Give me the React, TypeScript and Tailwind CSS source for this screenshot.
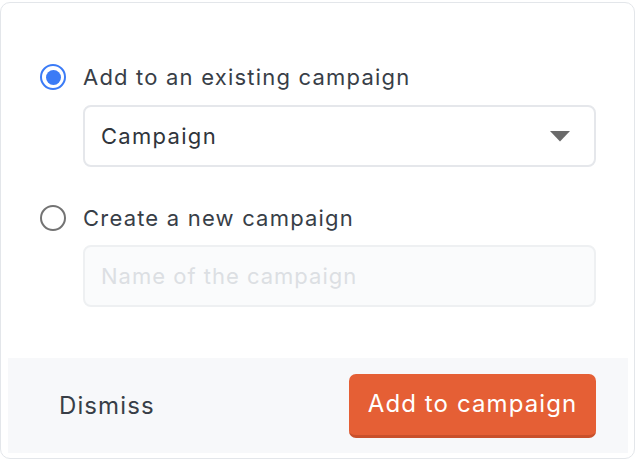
import React from "react";

export default function App() {
  return (
    <div className="w-[636px] h-[460px] bg-white pt-[2px]" style={{ fontFamily: "Inter, 'Noto Sans', sans-serif" }}>
      <div className="w-[635px] h-[457px] border border-[#e3e6ea] rounded-[10px] flex flex-col">
        <div className="pl-[39px] pr-[38px] pt-[58px] flex flex-col">
          <label className="flex items-center h-[32px]">
            <span className="w-[26px] h-[26px] rounded-full border-[2.5px] border-[#3b7bf6] flex items-center justify-center">
              <span className="w-[15px] h-[15px] rounded-full bg-[#3b7bf6]" />
            </span>
            <span className="ml-[17px] text-[22px] text-[#383e47] tracking-[1.2px]">Add to an existing campaign</span>
          </label>
          <div className="ml-[43px] mt-[12px] h-[62px] border-2 border-[#e5e7eb] rounded-[8px] flex items-center justify-between pl-[16px] pr-[24px]">
            <span className="text-[22px] text-[#2f343b] tracking-[1.3px]">Campaign</span>
            <svg width="20" height="11" viewBox="0 0 20 11">
              <path d="M0 0 L20 0 L10 10.5 Z" fill="#6b6b6b" />
            </svg>
          </div>
          <label className="flex items-center h-[32px] mt-[35px]">
            <span className="w-[26px] h-[26px] rounded-full border-2 border-[#737373]" />
            <span className="ml-[17px] text-[22px] text-[#383e47] tracking-[1.2px]">Create a new campaign</span>
          </label>
          <div className="ml-[43px] mt-[11px] h-[62px] border-2 border-[#eef0f2] bg-[#fafbfc] rounded-[8px] flex items-center pl-[16px]">
            <span className="text-[22px] text-[#dcdfe3] tracking-[1px]">Name of the campaign</span>
          </div>
        </div>
        <div className="mt-[51px] ml-[7px] mr-[6px] h-[95px] bg-[#f7f8fa] flex items-center justify-between pl-[51px] pr-[32px]">
          <span className="text-[24px] text-[#383e47] tracking-[1.1px]">Dismiss</span>
          <button className="h-[64px] w-[247px] rounded-[7px] bg-[#e55f35] border-b-[3px] border-[#c9502b] text-white text-[24px] tracking-[1.1px] flex items-center justify-center">
            Add to campaign
          </button>
        </div>
      </div>
    </div>
  );
}
